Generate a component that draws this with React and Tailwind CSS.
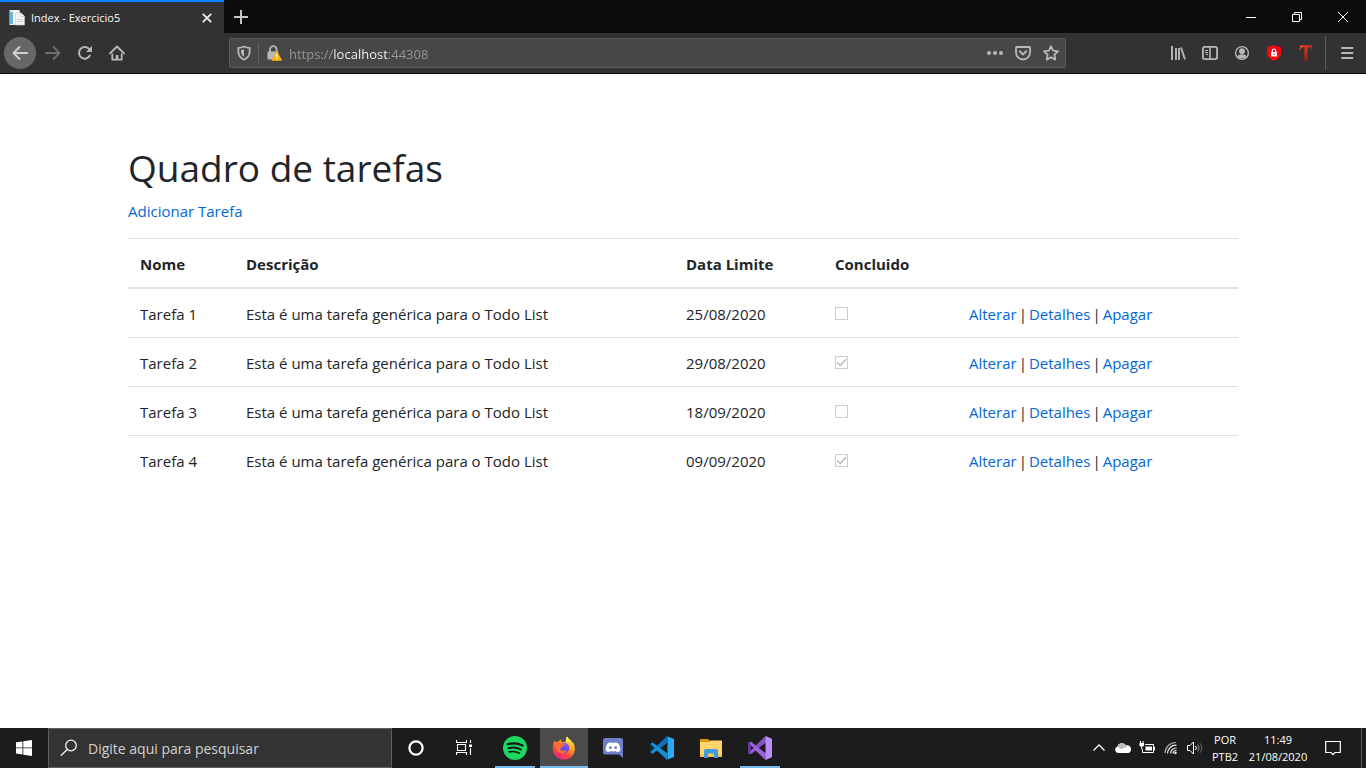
import React from "react";

const tasks = [
  { name: "Tarefa 1", date: "25/08/2020", done: false },
  { name: "Tarefa 2", date: "29/08/2020", done: true },
  { name: "Tarefa 3", date: "18/09/2020", done: false },
  { name: "Tarefa 4", date: "09/09/2020", done: true },
];

function Icon({ size = 16, children, ...rest }) {
  return (
    <svg width={size} height={size} viewBox={`0 0 ${size} ${size}`} fill="none" aria-hidden="true" {...rest}>
      {children}
    </svg>
  );
}

function TitleBar() {
  const control = "grid h-full w-[46px] place-items-center";
  return (
    <div className="flex h-[33px] bg-[#0c0c0d]">
      <div className="flex w-56 items-center border-t-2 border-[#0a84ff] bg-[#323234] px-2">
        <Icon size={18}>
          <path d="M1.500 1h10v15h-10z" fill="#dfe8ee" />
          <path d="M2 3h3v12H2z" fill="#6fb4da" />
          <path d="M5 1h5l2 2v12H5z" fill="#f4f5f6" />
          <path d="M7.500 4H13l3.500 3.500V16h-9z" fill="#f4f4f4" stroke="#c8ccd0" strokeWidth=".6" />
          <path d="M13 4v3.500h3.500" fill="#fff" stroke="#c0c4c8" strokeWidth=".8" />
          <path d="M9 10.500h6M9 12.500h6" stroke="#ccd0d4" />
        </Icon>
        <span className="ml-[5px] grow text-[11px] leading-4 text-[#f9f9fa]">Index - Exercicio5</span>
        <button aria-label="Fechar aba" className="grid size-[18px] place-items-center">
          <Icon size={12}>
            <path d="M1.800 1.800l8.400 8.400M10.200 1.800l-8.400 8.400" stroke="#ececee" strokeWidth="1.800" />
          </Icon>
        </button>
      </div>
      <button aria-label="Nova aba" className="grid w-[34px] place-items-center">
        <Icon size={14}>
          <path d="M7 0v14M0 7h14" stroke="#c6c6c7" strokeWidth="2" />
        </Icon>
      </button>
      <div className="grow" />
      <button aria-label="Minimizar" className={control}>
        <Icon size={10}><path d="M0 5.500h10" stroke="#fff" /></Icon>
      </button>
      <button aria-label="Restaurar" className={control}>
        <Icon size={10}><path d="M.5 2.500h7v7h-7zM2.500 2.500v-2h7v7h-2" stroke="#fff" /></Icon>
      </button>
      <button aria-label="Fechar" className={control}>
        <Icon size={10}><path d="M0 0l10 10M10 0L0 10" stroke="#fff" /></Icon>
      </button>
    </div>
  );
}

function NavBar() {
  const tool = "grid size-8 place-items-center";
  return (
    <div className="flex h-[41px] items-center border-b border-[#0c0c0d] bg-[#323234] text-[#b8b8ba]">
      <button aria-label="Voltar" className="ml-1 grid size-8 place-items-center rounded-full bg-[#676768] text-[#d0d0d1]">
        <Icon><path d="M15 8H1.500M7.500 2L1.500 8l6 6" stroke="currentColor" strokeWidth="2" strokeLinecap="round" strokeLinejoin="round" /></Icon>
      </button>
      <button aria-label="Avançar" className={`${tool} ml-px text-[#707072]`}>
        <Icon><path d="M1 8h13.500M8.500 2l6 6-6 6" stroke="currentColor" strokeWidth="1.800" strokeLinecap="round" strokeLinejoin="round" /></Icon>
      </button>
      <button aria-label="Recarregar" className={tool}>
        <Icon>
          <path d="M12.900 10.600A5.800 5.800 0 1 1 12.400 4.300" stroke="currentColor" strokeWidth="2" strokeLinecap="round" />
          <path d="M15 1v5.500a.5.5 0 0 1-.5.5H9z" fill="currentColor" />
        </Icon>
      </button>
      <button aria-label="Página inicial" className={tool}>
        <Icon>
          <path d="M1 8.400L8 1.500l7 6.900" stroke="currentColor" strokeWidth="2" strokeLinecap="round" strokeLinejoin="round" />
          <path d="M3.300 8.500v6.200h9.400V8.500" stroke="currentColor" strokeWidth="1.800" strokeLinejoin="round" />
          <path d="M6.700 10h2.600v4.500H6.700z" fill="currentColor" />
        </Icon>
      </button>
      <div className="mx-24 flex h-[30px] grow items-center rounded-xs border border-[#5a5a5c] bg-[#474749]">
        <button aria-label="Proteção" className="grid h-full w-7 place-items-center">
          <Icon>
            <path d="M8 1.500c2 1 4 1.300 5.700 1.400v3.400c0 4-1.900 6.700-5.700 8.400-3.800-1.700-5.700-4.400-5.700-8.400V2.900C4 2.800 6 2.500 8 1.500z" stroke="currentColor" strokeWidth="1.800" strokeLinejoin="round" />
            <path d="M8 4.300v7.600c-2-1.200-3-3-3-5.600V5c1.200 0 2.100-.3 3-.7z" fill="currentColor" />
          </Icon>
        </button>
        <span className="h-5 w-px bg-[#626264]" />
        <button aria-label="Informações do site" className="grid h-full w-[30px] place-items-center">
          <Icon>
            <path d="M4 7V4.500a3.300 3.300 0 0 1 6.600 0V7" stroke="currentColor" strokeWidth="1.800" />
            <path d="M2.500 6.500h9.800v8H2a1 1 0 0 1-.5-.8V7.500a1 1 0 0 1 1-1z" fill="currentColor" />
            <path d="M10.700 6.500l4.800 8.700H5.900z" fill="#ffb200" stroke="#ffb200" strokeLinejoin="round" />
            <path d="M10.700 9v3.200M10.700 13.200v1.200" stroke="#fff" strokeWidth="1.300" />
          </Icon>
        </button>
        <input
          aria-label="Endereço"
          defaultValue="https://localhost:44308"
          className="min-w-0 grow bg-[linear-gradient(to_right,#98989a_44px,#f9f9fa_44px,#f9f9fa_99px,#98989a_99px)] bg-clip-text pt-px text-[13px] leading-5 text-transparent outline-none"
        />
        <button aria-label="Ações da página" className="grid size-7 place-items-center">
          <Icon><g fill="currentColor"><circle cx="2" cy="8" r="2" /><circle cx="8" cy="8" r="2" /><circle cx="14" cy="8" r="2" /></g></Icon>
        </button>
        <button aria-label="Salvar no Pocket" className="grid size-7 place-items-center">
          <Icon>
            <path d="M2 2h12a1 1 0 0 1 1 1v4.500a7 7 0 0 1-14 0V3a1 1 0 0 1 1-1z" stroke="currentColor" strokeWidth="1.800" />
            <path d="M4.700 6.300L8 9.500l3.300-3.200" stroke="currentColor" strokeWidth="1.900" strokeLinecap="round" strokeLinejoin="round" />
          </Icon>
        </button>
        <button aria-label="Adicionar aos favoritos" className="grid size-7 place-items-center">
          <Icon><path d="M8 1.200l2.100 4.500 4.900.6-3.600 3.400.9 4.900L8 12.200l-4.300 2.400.9-4.900L1 6.300l4.900-.6z" stroke="currentColor" strokeWidth="1.800" strokeLinejoin="round" /></Icon>
        </button>
      </div>
      <button aria-label="Biblioteca" className={tool}>
        <Icon><path d="M2 1v14M6 3v12M9 3v12M11 2.500L15 14.500" stroke="currentColor" strokeWidth="1.900" /></Icon>
      </button>
      <button aria-label="Barra lateral" className={tool}>
        <Icon>
          <rect x=".9" y="1.900" width="14.200" height="12.200" rx="1.800" stroke="currentColor" strokeWidth="1.800" />
          <path d="M8 2v12" stroke="currentColor" strokeWidth="1.600" />
          <path d="M3 5.500h3M3 7.500h3M4 9.500h2" stroke="currentColor" />
        </Icon>
      </button>
      <button aria-label="Conta" className={tool}>
        <Icon>
          <circle cx="8" cy="8" r="6.400" stroke="currentColor" strokeWidth="1.400" />
          <circle cx="8" cy="6.200" r="2.900" fill="currentColor" />
          <path d="M3.300 11.300c1-1.500 2.300-1.800 4.700-1.800s3.700.3 4.700 1.800C11.500 12.700 10 13.400 8 13.400s-3.500-.7-4.700-2.100z" fill="currentColor" />
        </Icon>
      </button>
      <button aria-label="Extensão de segurança" className={tool}>
        <Icon>
          <path d="M8 0l7 2.200v5.300c0 4-2.600 7-7 8.500-4.400-1.500-7-4.500-7-8.500V2.200z" fill="#f5070f" />
          <path d="M6.300 7V5.700a1.700 1.700 0 0 1 3.400 0V7" stroke="#fff" strokeWidth="1.200" />
          <path d="M5 7h6v4.500H5z" fill="#fff" /><path d="M7.500 8.500h1V10h-1z" fill="#f5070f" />
        </Icon>
      </button>
      <button aria-label="Extensão de texto" className="grid h-8 w-[31px] place-items-center">
        <Icon>
          <defs><linearGradient id="tee" x1="0" x2="1" y2="1"><stop stopColor="#ee4a30" /><stop offset=".5" stopColor="#c62a18" /><stop offset="1" stopColor="#5c0c05" /></linearGradient></defs>
          <path d="M2 .3h12l.5 4.400h-1C13 2.800 12.300 2.300 10.500 2.300H9.700v11.200c0 1 .4 1.300 1.800 1.400v.7H4.700v-.7c1.400-.1 1.800-.4 1.800-1.400V2.300H5.700c-2 0-2.600.5-3.100 2.400h-1z" fill="url(#tee)" />
        </Icon>
      </button>
      <span className="ml-1 h-[34px] w-px bg-[#5c5c5e]" />
      <button aria-label="Abrir menu" className="ml-[5px] mr-[3px] grid size-8 place-items-center">
        <Icon><path d="M3 3h10.500M3 8h10.500M3 13h10.500" stroke="currentColor" strokeWidth="2" strokeLinecap="round" /></Icon>
      </button>
    </div>
  );
}

function TaskTable() {
  const link = "text-[#0366d6]";
  return (
    <table className="w-full table-fixed border-separate border-spacing-0 text-left text-[15px] leading-6">
      <colgroup>
        <col className="w-[106px]" />
        <col className="w-[440px]" />
        <col className="w-[149px]" />
        <col className="w-[134px]" />
        <col />
      </colgroup>
      <thead>
        <tr className="[&>*]:border-b-2 [&>*]:border-t [&>*]:border-[#dee2e6] [&>*]:px-3 [&>*]:pb-[11px] [&>*]:pt-[13px]">
          <th>Nome</th>
          <th>Descrição</th>
          <th>Data Limite</th>
          <th>Concluido</th>
          <td />
        </tr>
      </thead>
      <tbody>
        {tasks.map((task) => (
          <tr key={task.name} className="[&:not(:first-child)>td]:border-t [&>td]:border-[#dee2e6] [&>td]:px-3 [&>td]:pb-[11px] [&>td]:pt-[13px]">
            <td>{task.name}</td>
            <td>Esta é uma tarefa genérica para o Todo List</td>
            <td>{task.date}</td>
            <td>
              <span className="relative mb-[2px] block size-[13px]">
                <input
                  type="checkbox"
                  disabled
                  defaultChecked={task.done}
                  aria-label={`${task.name} concluída`}
                  className="block size-[13px] appearance-none border border-[#ccc] bg-white"
                />
                {task.done && (
                  <Icon size={13} className="absolute inset-0">
                    <path d="M2 6.300l3.200 3.200 5.800-6.300" stroke="#b8b8b8" strokeWidth="1.500" />
                  </Icon>
                )}
              </span>
            </td>
            <td>
              <span className="flex gap-[2px]">
                <a href="#alterar" className={link}>Alterar</a>
                <span>|</span>
                <a href="#detalhes" className={link}>Detalhes</a>
                <span>|</span>
                <a href="#apagar" className={link}>Apagar</a>
              </span>
            </td>
          </tr>
        ))}
      </tbody>
    </table>
  );
}

function Spotify() {
  return (
    <Icon size={24}>
      <circle cx="12" cy="12" r="12" fill="#1ed760" />
      <path d="M4.800 8.200c5-1.500 10.400-1 14.700 1.400" stroke="#181818" strokeWidth="2.300" strokeLinecap="round" />
      <path d="M5.500 12.200c4.300-1.200 8.800-.7 12.500 1.400" stroke="#181818" strokeWidth="1.900" strokeLinecap="round" />
      <path d="M6.200 15.900c3.700-.8 7.300-.5 10.300 1.300" stroke="#181818" strokeWidth="1.600" strokeLinecap="round" />
    </Icon>
  );
}

function Firefox() {
  return (
    <Icon size={24}>
      <defs>
        <linearGradient id="fox" x1=".8" y1=".1" x2=".25" y2="1">
          <stop stopColor="#fff044" /><stop offset=".35" stopColor="#ff9a1f" /><stop offset=".65" stopColor="#ff4a3b" /><stop offset="1" stopColor="#e91e8c" />
        </linearGradient>
        <linearGradient id="globe" x1=".7" x2=".3" y2="1"><stop stopColor="#9059ff" /><stop offset="1" stopColor="#5142c8" /></linearGradient>
        <linearGradient id="flame" x1=".4" x2=".7" y2="1"><stop stopColor="#fff36e" /><stop offset=".5" stopColor="#ffd02f" /><stop offset="1" stopColor="#ff8b16" /></linearGradient>
      </defs>
      <path d="M2.700 4.200c.2 1 .5 1.600 1.100 2.200.9-.5 1.800-.6 2.700-.5.700-1.200 1.500-2 2.700-2.400-.4.900-.4 1.700 0 2.300L13 6c1.500-1.800 1-3.600 2-5.500 1.300 2.600 3.800 3.400 5.300 6 1-.1 1.200.6 1.500 1.200C25 15.800 20 23.500 12.200 23.500 5.500 23.500.5 18.500.7 11.500c.1-2.800.8-5.300 2-7.300z" fill="url(#fox)" />
      <circle cx="12" cy="12" r="5.300" fill="url(#globe)" />
      <path d="M15 .5c-1.600 2.200-1.400 4.500.8 6.200 2.800 2.200 3.500 5.500 1.500 8.600 3.800-1.200 4.300-5.300 3-8.800-1-2.600-4-3.500-5.300-6z" fill="url(#flame)" />
      <path d="M3.800 6.400c2-1 4.200-.5 5.400.7 1 1 2.600 1 3.500 1.100.2 1.200-1.200 1.700-2.600 2.200-.4 1.600-1.100 2-2.200 2.400 2 3.500 5.200 1.600 7.500 1.400-2.300 4.500-9.300 3.800-11.300-.9-1-2.300-.9-4.700-.3-6.900z" fill="#ff7139" />
    </Icon>
  );
}

function Discord() {
  return (
    <Icon size={20}>
      <path d="M2 0h16a2 2 0 0 1 2 2v18l-4-3.500H2a2 2 0 0 1-2-2V2a2 2 0 0 1 2-2z" fill="#6c7fc8" />
      <path d="M4.300 5.700c1.200-.9 2.300-1.300 3.400-1.400l.5.700c1.200-.2 2.400-.2 3.600 0l.5-.7c1.100.1 2.200.5 3.400 1.400 1.200 2.200 1.800 4.600 1.500 7.100-1 .8-2.100 1.300-3.300 1.500l-.8-1.300c-2 .6-4.200.6-6.200 0l-.8 1.300c-1.200-.2-2.300-.7-3.300-1.500-.3-2.500.3-4.900 1.500-7.100z" fill="#fff" />
      <circle cx="7.300" cy="9.700" r="1.400" fill="#6c7fc8" /><circle cx="12.700" cy="9.700" r="1.400" fill="#6c7fc8" />
    </Icon>
  );
}

function VsCode() {
  return (
    <Icon size={24}>
      <path fillRule="evenodd" d="M.4 8L2.300 6.400l4.500 3.300L17 .3l.5 6.500L3.200 17.600l-1 .2L.4 16z" fill="#0873b8" />
      <path d="M.4 8l1.900-1.600L17.500 17.200 17 23.700 6.800 14.300l-4.500 3.300L.4 16l4-4z" fill="#1490d8" />
      <path d="M.4 8.300v7.400L4.400 12z" fill="#1c1c1c" />
      <path d="M11 12l6.500-5v10z" fill="#1c1c1c" />
      <path d="M17 .2L24 3v18l-7 2.800c-.4.100-.7 0-1-.3.900.3 1.500 0 1.500-1V1.500c0-1-.6-1.300-1.500-1 .3-.3.6-.4 1-.3z" fill="#2aaaf2" />
    </Icon>
  );
}

function Explorer() {
  return (
    <Icon size={22}>
      <path d="M0 2h8l2 2v4H0z" fill="#d99a10" />
      <path d="M0 5h9l1.500-1.500H22V20H0z" fill="#ffd468" />
      <path d="M0 17h22v3H0z" fill="#f7c34c" />
      <path d="M4 21v-7a2 2 0 0 1 2-2h10a2 2 0 0 1 2 2v7h-4v-4.500H8V21z" fill="#3c9be3" />
    </Icon>
  );
}

function VisualStudio() {
  return (
    <Icon size={24}>
      <path d="M0 7l2-1.200 5 4.200L17.500 0 18 6.700 3 18.200 0 17z" fill="#8052c2" />
      <path d="M0 17l2 1.200 5-4.200L17.500 24l.5-6.700L3 5.800 0 7z" fill="#9a62dd" />
      <path d="M2.500 9v6L5.500 12z" fill="#1c1c1c" />
      <path d="M11 12l6.500-5v10z" fill="#1c1c1c" />
      <path d="M0 7l2.300-1.100L2.500 18 0 17z" fill="#6636a6" />
      <path d="M17.500 0L24 2.700v18.600L17.500 24z" fill="#bb8cf8" />
    </Icon>
  );
}

const apps = [
  { label: "Spotify", icon: <Spotify />, open: true },
  { label: "Firefox", icon: <Firefox />, open: true, active: true },
  { label: "Discord", icon: <Discord /> },
  { label: "Visual Studio Code", icon: <VsCode /> },
  { label: "Explorador de Arquivos", icon: <Explorer /> },
  { label: "Visual Studio", icon: <VisualStudio />, open: true },
];

function Taskbar() {
  const tray = "grid w-6 place-items-center";
  return (
    <footer className="flex h-10 bg-[#1c1c1c] text-white">
      <button aria-label="Iniciar" className="grid w-12 place-items-center">
        <Icon><path d="M0 2.300l6.500-.9v6.100H0zM7.300 1.200L16 0v7.500H7.300zM0 8.300h6.500v6.200L0 13.600zM7.300 8.300H16V16l-8.700-1.200z" fill="#fff" /></Icon>
      </button>
      <label className="flex w-[344px] items-center border border-[#5e5e5e] bg-[#333] pl-[11px]">
        <Icon size={18}>
          <circle cx="11" cy="6.500" r="5.300" stroke="#f0f0f0" strokeWidth="1.300" />
          <path d="M7.200 10.500L.8 16.800" stroke="#f0f0f0" strokeWidth="1.400" />
        </Icon>
        <input
          aria-label="Pesquisar"
          placeholder="Digite aqui para pesquisar"
          className="ml-[10px] min-w-0 grow bg-transparent pt-px text-[14px] leading-5 outline-none placeholder:text-[#d2d2d2]"
        />
      </label>
      <button aria-label="Cortana" className="grid w-12 place-items-center">
        <Icon><circle cx="8" cy="8" r="6.600" stroke="#fff" strokeWidth="2.200" /></Icon>
      </button>
      <button aria-label="Visão de tarefas" className="grid w-12 place-items-center">
        <Icon>
          <path d="M.5 0v2.500h10V0M.5 15v-2.500h10V15M1.500 4.500h8v6h-8zM14.500 0v3M14.500 8v7" stroke="#fff" strokeWidth="1.100" />
          <path d="M13 4.500h3v2.500h-3z" fill="#fff" />
        </Icon>
      </button>
      <div className="ml-[3px] flex gap-px">
        {apps.map((app) => (
          <button
            key={app.label}
            aria-label={app.label}
            className={`relative grid w-12 place-items-center ${app.active ? "bg-[#4b4b4b]" : ""}`}
          >
            {app.icon}
            {app.open && <span className={`absolute bottom-0 h-0.5 bg-[#76b9ed] ${app.active ? "inset-x-0" : "inset-x-1"}`} />}
          </button>
        ))}
      </div>
      <div className="grow" />
      <button aria-label="Ícones ocultos" className={tray}>
        <Icon size={14}><path d="M1.500 9.500L7 4l5.500 5.500" stroke="#fff" strokeWidth="1.300" /></Icon>
      </button>
      <button aria-label="OneDrive" className={tray}>
        <Icon>
          <path d="M3.200 13a3.200 3.200 0 0 1-1-6.200 5 5 0 0 1 8.800-1.500 4 4 0 0 1 5 4.200c0 2.300-1 3.500-3 3.500z" fill="#fff" />
          <path d="M2.200 6.800a5 5 0 0 1 8.800-1.500c.5.500.8 1 1 1.500L6.500 9z" fill="#bdbdbd" />
        </Icon>
      </button>
      <button aria-label="Bateria" className={tray}>
        <Icon>
          <path d="M6 4.500h8.500v8h-11V9M14.500 7h1v3h-1" stroke="#fff" />
          <path d="M6.500 6.500h6.500v4H6.500z" fill="#fff" />
          <path d="M.5 3h4.500v2.500L4 6.500H1.500L.5 5.500z" fill="#fff" /><path d="M1.500 1v2M4 1v2M2.700 6v3" stroke="#fff" />
        </Icon>
      </button>
      <button aria-label="Rede sem fio" className={tray}>
        <Icon>
          <path d="M2 13A11 11 0 0 1 13 2.500" stroke="#aaa" strokeWidth="1.200" />
          <path d="M4.500 13.500a8.500 8.500 0 0 1 9-8.300M7.500 13.500a5.800 5.800 0 0 1 6-5.500M10 13.500a3.300 3.300 0 0 1 3.500-3" stroke="#eee" strokeWidth="1.200" />
          <circle cx="12.500" cy="13" r="1.200" fill="#fff" />
        </Icon>
      </button>
      <button aria-label="Volume" className={tray}>
        <Icon>
          <path d="M.5 5.500H3l3.500-3.500v12L3 10.500H.5zM8.500 6a3 3 0 0 1 0 4" stroke="#fff" />
          <path d="M10.500 4.500a5 5 0 0 1 0 7" stroke="#999" /><path d="M12.700 3a7 7 0 0 1 0 10" stroke="#666" />
        </Icon>
      </button>
      <button className="flex w-9 flex-col items-center justify-center text-[11px] leading-[17px]">
        <span>POR</span><span>PTB2</span>
      </button>
      <button className="flex w-[70px] flex-col items-center justify-center text-[11px] leading-[17px]">
        <span>11:49</span><span>21/08/2020</span>
      </button>
      <button aria-label="Notificações" className="grid w-10 place-items-center">
        <Icon><path d="M.7 1.500h14.600v11H10l-2 2.200-2-2.200H.7z" stroke="#fff" strokeWidth="1.200" /></Icon>
      </button>
      <button aria-label="Mostrar área de trabalho" className="ml-2 w-[5px] border-l border-[#5e5e5e]" />
    </footer>
  );
}

export default function App() {
  return (
    <div className="flex min-h-screen flex-col bg-white font-['Open_Sans','Noto_Sans',sans-serif] text-[#212529]">
      <header>
        <TitleBar />
        <NavBar />
      </header>
      <main className="mx-auto w-full max-w-[1140px] grow px-[15px] pt-[70px]">
        <h1 className="mb-[7px] text-[37px] leading-[48px]">Quadro de tarefas</h1>
        <p className="mb-[15px] text-[15px] leading-6">
          <a href="#adicionar" className="text-[#0366d6]">Adicionar Tarefa</a>
        </p>
        <TaskTable />
      </main>
      <Taskbar />
    </div>
  );
}
